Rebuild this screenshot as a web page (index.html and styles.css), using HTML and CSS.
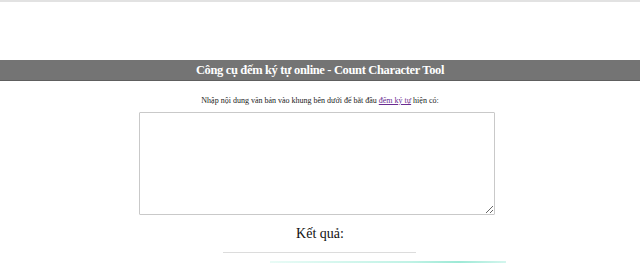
FILE: index.html
```html
<!DOCTYPE html>
<html lang="vi">
<head>
<meta charset="utf-8">
<title>Công cụ đếm ký tự online</title>
<link rel="stylesheet" href="styles.css">
</head>
<body>
<div class="topline"></div>
<div class="spacer"></div>
<h1 class="titlebar">Công cụ đếm ký tự online - Count Character Tool</h1>
<p class="intro">Nhập nội dung văn bản vào khung bên dưới để bắt đầu <a href="#" class="link">đếm ký tự</a> hiện có:</p>
<div class="areawrap"><textarea class="input"></textarea></div>
<h2 class="result">Kết quả:</h2>
<div class="rule"></div>
<div class="glow"></div>
</body>
</html>
```
FILE: styles.css
```css
html, body {
  margin: 0;
  padding: 0;
  background: #fff;
  font-family: "Liberation Serif", "Times New Roman", serif;
  overflow: hidden;
}
.topline {
  height: 2px;
  background: #e2e2e2;
}
.spacer {
  height: 58px;
}
.titlebar {
  margin: 0;
  height: 20px;
  line-height: 20px;
  background: #747474;
  border-bottom: 1px solid #5e5e5e;
  color: #fff;
  font-size: 12.5px;
  letter-spacing: -0.35px;
  font-weight: bold;
  text-align: center;
}
.intro {
  margin: 14px 0 0;
  font-size: 8px;
  line-height: 12px;
  color: #222;
  text-align: center;
}
.link {
  color: #6a2c91;
  text-decoration: underline;
}
.areawrap {
  display: flex;
  justify-content: center;
  margin-top: 5px;
}
.input {
  box-sizing: border-box;
  width: 356px;
  height: 103px;
  margin: 0 7px 0 0;
  border: 1px solid #c9c9c9;
  border-radius: 1px;
  resize: vertical;
  background: #fff;
}
.result {
  margin: 10px 0 0;
  font-size: 14px;
  line-height: 18px;
  font-weight: normal;
  color: #111;
  text-align: center;
}
.rule {
  width: 193px;
  height: 1px;
  margin: 9px 0 0 223px;
  background: #dcdcdc;
}
.glow {
  width: 236px;
  height: 3px;
  margin: 8px 0 0 270px;
  background: linear-gradient(90deg, #e9fbf6, #bff2e5 60%, #9de9d6 80%, #d4f6ee);
}
```
